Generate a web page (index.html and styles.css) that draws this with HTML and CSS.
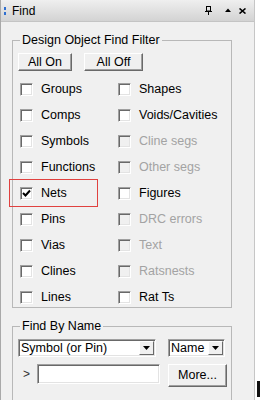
FILE: index.html
```html
<!DOCTYPE html>
<html lang="en">
<head>
  <meta charset="UTF-8">
  <title>Find</title>
  <link rel="stylesheet" href="styles.css">
</head>
<body>

<div class="panel">

  <!--title bar-->
  <div class="titlebar">
    <svg class="grip" width="2" height="8" viewBox="0 0 2 8"><rect y="0" width="2" height="3" fill="#2f6fd0"/><rect y="5" width="2" height="3" fill="#2f6fd0"/></svg>
    <span class="title">Find</span>
    <span class="tools">
      <svg class="pin" width="7" height="9" viewBox="0 0 7 9"><rect x="1.5" y="0.5" width="4" height="4.5" fill="none" stroke="#000"/><rect x="0" y="5" width="7" height="1" fill="#000"/><rect x="3" y="6" width="1" height="3" fill="#000"/></svg>
      <svg class="up" width="6" height="4" viewBox="0 0 6 4"><polygon points="0,4 6,4 3,0.5" fill="#000"/></svg>
      <svg class="close" width="7" height="6" viewBox="0 0 7 6"><path d="M0.5 0.5 L6.5 5.5 M6.5 0.5 L0.5 5.5" stroke="#000" stroke-width="1.6"/></svg>
    </span>
  </div>

  <div class="content">

    <!--filter group-->
    <fieldset class="group filter">
      <legend>Design Object Find Filter</legend>
      <div class="buttons">
        <button class="btn on">All On</button>
        <button class="btn off">All Off</button>
      </div>
      <div class="checks">
        <label class="check"><span class="box"></span>Groups</label>
        <label class="check"><span class="box"></span>Shapes</label>
        <label class="check"><span class="box"></span>Comps</label>
        <label class="check"><span class="box"></span>Voids/Cavities</label>
        <label class="check"><span class="box"></span>Symbols</label>
        <label class="check off"><span class="box"></span>Cline segs</label>
        <label class="check"><span class="box"></span>Functions</label>
        <label class="check off"><span class="box"></span>Other segs</label>
        <label class="check hl"><span class="box"><svg width="9" height="9" viewBox="0 0 9 9"><path d="M1 4 L3.5 6.5 L8 1.5" fill="none" stroke="#000" stroke-width="2"/></svg></span>Nets</label>
        <label class="check"><span class="box"></span>Figures</label>
        <label class="check"><span class="box"></span>Pins</label>
        <label class="check off"><span class="box"></span>DRC errors</label>
        <label class="check"><span class="box"></span>Vias</label>
        <label class="check off"><span class="box"></span>Text</label>
        <label class="check"><span class="box"></span>Clines</label>
        <label class="check off"><span class="box"></span>Ratsnests</label>
        <label class="check"><span class="box"></span>Lines</label>
        <label class="check"><span class="box"></span>Rat Ts</label>
      </div>
    </fieldset>

    <!--find by name-->
    <fieldset class="group byname">
      <legend>Find By Name</legend>
      <div class="row">
        <div class="combo sym">
          <span class="val">Symbol (or Pin)</span>
          <span class="drop"><svg width="7" height="4" viewBox="0 0 7 4"><polygon points="0,0 7,0 3.5,4" fill="#000"/></svg></span>
        </div>
        <div class="combo name">
          <span class="val">Name</span>
          <span class="drop"><svg width="7" height="4" viewBox="0 0 7 4"><polygon points="0,0 7,0 3.5,4" fill="#000"/></svg></span>
        </div>
      </div>
      <div class="row row2">
        <span class="prompt">&gt;</span>
        <span class="field"></span>
        <button class="btn more">More...</button>
      </div>
    </fieldset>

  </div>
</div>

<div class="edge"><span class="mark"></span></div>

</body>
</html>
```

FILE: styles.css
```css
* {
  margin: 0;
  padding: 0;
  box-sizing: border-box;
}

body {
  display: flex;
  width: 260px;
  height: 400px;
  overflow: hidden;
  background-color: #fff;
  font-family: "Liberation Sans", Arial, sans-serif;
  font-size: 12.5px;
  color: #000;
}

.panel {
  width: 255px;
  height: 400px;
  overflow: hidden;
  background-color: #f0f0f0;
  border-left: 1px solid #a9a9a9;
  border-right: 1px solid #c6c6c6;
}

/*title bar*/
.titlebar {
  height: 22px;
  display: flex;
  align-items: center;
  padding: 0 8px 0 3px;
  background: linear-gradient(#efefef, #d3d3d3);
  border-bottom: 1px solid #c4c4c4;
}

.title {
  margin-left: 6px;
  font-size: 12px;
}

.tools {
  margin-left: auto;
  display: flex;
  align-items: center;
}

.tools .up {
  margin-left: 13px;
  margin-top: -2px;
}

.tools .close {
  margin-left: 8px;
}

.content {
  padding: 11px 0 0 11px;
}

/*group boxes*/
.group {
  width: 220px;
  border: 1px solid #b8b8b8;
  padding: 5px 0 2px 5px;
}

.group legend {
  line-height: 15px;
  padding: 0 2px;
  margin-left: 2px;
}

.buttons {
  display: flex;
  gap: 12px;
}

.btn {
  height: 18px;
  padding: 0;
  font: inherit;
  line-height: 16px;
  color: #000;
  background-color: #f0f0f0;
  border: 1px solid;
  border-color: #fff #696969 #696969 #fff;
  box-shadow: inset -1px -1px 0 #a0a0a0;
}

.btn.on {
  width: 54px;
}

.btn.off {
  width: 59px;
}

.checks {
  display: grid;
  grid-template-columns: 98px 100px;
  row-gap: 10px;
  margin-top: 10px;
}

.check {
  display: flex;
  align-items: center;
  gap: 8px;
  height: 16px;
  line-height: 16px;
  white-space: nowrap;
}

.box {
  flex: none;
  width: 13px;
  height: 13px;
  margin-left: 2px;
  display: flex;
  align-items: center;
  justify-content: center;
  background-color: #fff;
  border: 1px solid;
  border-color: #a0a0a0 #fff #fff #a0a0a0;
  box-shadow: inset 1px 1px 0 #696969, inset -1px -1px 0 #e3e3e3;
}

.check.off {
  color: #a3a3a3;
}

.check.off .box {
  background-color: #f0f0f0;
}

/*red mark round Nets*/
.check.hl {
  position: relative;
}

.check.hl::after {
  content: "";
  position: absolute;
  left: -9px;
  right: 18px;
  top: -6px;
  bottom: -6px;
  border: 1px solid #e0413f;
}

/*find by name*/
.byname {
  margin-top: 11px;
  padding: 5px 0 30px 5px;
}

.row {
  display: flex;
  align-items: flex-start;
  gap: 12px;
}

.row2 {
  gap: 0;
  margin-top: 7px;
}

.combo {
  height: 18px;
  display: flex;
  padding: 1px;
  background-color: #fff;
  border: 1px solid;
  border-color: #a0a0a0 #fff #fff #a0a0a0;
  box-shadow: inset 1px 1px 0 #696969, inset -1px -1px 0 #e3e3e3;
}

.combo.sym {
  width: 138px;
}

.combo.name {
  width: 57px;
}

.combo .val {
  flex: 1;
  padding-left: 1px;
  line-height: 14px;
  white-space: nowrap;
  overflow: hidden;
}

.combo .drop {
  width: 15px;
  display: flex;
  align-items: center;
  justify-content: center;
  background-color: #f0f0f0;
  border: 1px solid;
  border-color: #fff #696969 #696969 #fff;
}

.prompt {
  width: 19px;
  padding-left: 5px;
  line-height: 20px;
  font-size: 12px;
  color: #333;
}

.field {
  width: 123px;
  height: 20px;
  background-color: #fff;
  border: 1px solid;
  border-color: #a0a0a0 #fff #fff #a0a0a0;
  box-shadow: inset 1px 1px 0 #696969, inset -1px -1px 0 #e3e3e3;
}

.btn.more {
  width: 59px;
  height: 23px;
  margin-left: 8px;
  line-height: 21px;
}

/*strip right of the panel*/
.edge {
  width: 5px;
  display: flex;
  flex-direction: column;
  justify-content: flex-end;
  padding: 0 0 3px 2px;
}

.mark {
  width: 3px;
  height: 16px;
  background-color: #111;
}
```
